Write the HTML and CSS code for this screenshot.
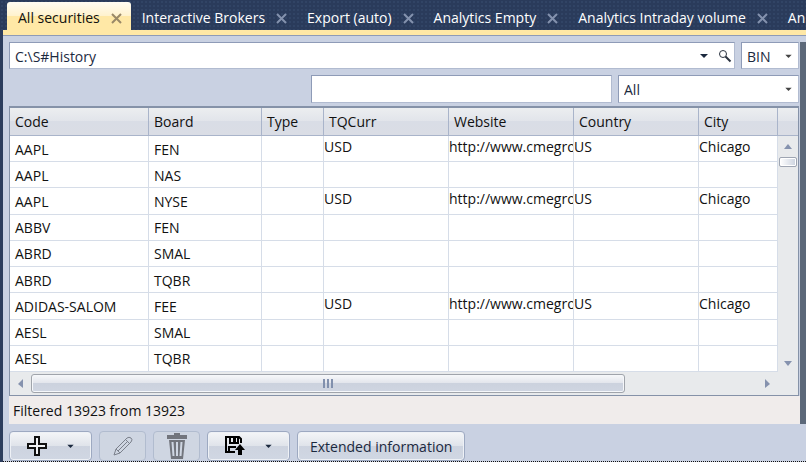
FILE: index.html
```html
<!DOCTYPE html>
<html lang="en">
<head>
<meta charset="utf-8">
<title>All securities</title>
<link rel="stylesheet" href="styles.css">
</head>
<body>
<nav class="tabs" aria-label="Open documents">
  <div class="tab active"><a href="#securities">All securities</a><button class="close" aria-label="Close All securities"><svg viewBox="0 0 11 11"><path d="M1 1l9 9M10 1l-9 9"/></svg></button></div>
  <div class="tab"><a href="#ib">Interactive Brokers</a><button class="close" aria-label="Close Interactive Brokers"><svg viewBox="0 0 11 11"><path d="M1 1l9 9M10 1l-9 9"/></svg></button></div>
  <div class="tab"><a href="#export">Export (auto)</a><button class="close" aria-label="Close Export"><svg viewBox="0 0 11 11"><path d="M1 1l9 9M10 1l-9 9"/></svg></button></div>
  <div class="tab"><a href="#empty">Analytics Empty</a><button class="close" aria-label="Close Analytics Empty"><svg viewBox="0 0 11 11"><path d="M1 1l9 9M10 1l-9 9"/></svg></button></div>
  <div class="tab"><a href="#volume">Analytics Intraday volume</a><button class="close" aria-label="Close Analytics Intraday volume"><svg viewBox="0 0 11 11"><path d="M1 1l9 9M10 1l-9 9"/></svg></button></div>
  <div class="tab"><a href="#next">An</a></div>
</nav>
<main class="panel">
  <div class="workspace">
    <div class="content">
      <div class="path-row">
        <div class="path field">
          <input type="text" value="C:\S#History" aria-label="Data path">
          <button class="plain" aria-label="Recent paths"><svg class="arrow" viewBox="0 0 8 5"><path d="M0 1h8L4 5z"/></svg></button>
          <button class="plain" aria-label="Browse"><svg class="search" viewBox="0 0 14 14"><circle cx="5" cy="5" r="3.500"/><path class="handle" d="M7.500 7.500l5 5"/></svg></button>
        </div>
        <div class="format field">
          <select aria-label="Format"><option>BIN</option></select>
          <svg class="arrow small" viewBox="0 0 8 5"><path d="M0 1h8L4 5z"/></svg>
        </div>
      </div>
      <div class="filter-row">
        <div class="search-box field"><input type="text" aria-label="Filter securities"></div>
        <div class="kind field">
          <select aria-label="Security type"><option>All</option></select>
          <svg class="arrow small" viewBox="0 0 8 5"><path d="M0 1h8L4 5z"/></svg>
        </div>
      </div>
      <div class="grid">
        <div class="grid-main">
          <div class="table-area">
          <table>
            <colgroup><col class="c-code"><col class="c-board"><col class="c-type"><col class="c-wide"><col class="c-wide"><col class="c-wide"><col></colgroup>
            <thead><tr><th>Code</th><th>Board</th><th>Type</th><th>TQCurr</th><th>Website</th><th>Country</th><th>City</th></tr></thead>
            <tbody>
              <tr><td>AAPL</td><td>FEN</td><td></td><td class="ext">USD</td><td class="ext">http://www.cmegroup.com</td><td class="ext">US</td><td class="ext">Chicago</td></tr>
              <tr><td>AAPL</td><td>NAS</td><td></td><td></td><td></td><td></td><td></td></tr>
              <tr><td>AAPL</td><td>NYSE</td><td></td><td class="ext">USD</td><td class="ext">http://www.cmegroup.com</td><td class="ext">US</td><td class="ext">Chicago</td></tr>
              <tr><td>ABBV</td><td>FEN</td><td></td><td></td><td></td><td></td><td></td></tr>
              <tr><td>ABRD</td><td>SMAL</td><td></td><td></td><td></td><td></td><td></td></tr>
              <tr><td>ABRD</td><td>TQBR</td><td></td><td></td><td></td><td></td><td></td></tr>
              <tr><td>ADIDAS-SALOM</td><td>FEE</td><td></td><td class="ext">USD</td><td class="ext">http://www.cmegroup.com</td><td class="ext">US</td><td class="ext">Chicago</td></tr>
              <tr><td>AESL</td><td>SMAL</td><td></td><td></td><td></td><td></td><td></td></tr>
              <tr><td>AESL</td><td>TQBR</td><td></td><td></td><td></td><td></td><td></td></tr>
            </tbody>
          </table>
          </div>
          <div class="vbar">
            <div class="vcap"></div>
            <svg class="up" viewBox="0 0 8 5"><path d="M0 5h8L4 0z"/></svg>
            <div class="vthumb"></div>
            <svg class="down" viewBox="0 0 8 5"><path d="M0 0h8L4 5z"/></svg>
          </div>
        </div>
        <div class="hbar">
          <svg class="side" viewBox="0 0 5 9"><path d="M5 0v9L0 5z"/></svg>
          <div class="hthumb"><i></i><i></i><i></i></div>
          <svg class="side" viewBox="0 0 5 9"><path d="M0 0v9l5-4z"/></svg>
        </div>
      </div>
      <div class="status">Filtered 13923 from 13923</div>
    </div>
    <div class="splitter"></div>
  </div>
  <div class="toolbar">
    <button class="btn split" aria-label="Add">
      <svg class="i20" viewBox="0 0 20 20"><path class="plus" d="M8 1h4v7h7v4h-7v7H8v-7H1V8h7z"/></svg>
      <svg class="arrow small" viewBox="0 0 8 5"><path d="M0 1h8L4 5z"/></svg>
    </button>
    <button class="btn off" disabled aria-label="Edit">
      <svg class="i20" viewBox="0 0 20 20"><path class="pencil" d="M1 19l2-6L14 2q2-1.500 4 0t0 4L7 17zM3 13l4 4M12.500 3.500l4 4M5 15L14.500 5.500"/></svg>
    </button>
    <button class="btn off" disabled aria-label="Delete">
      <svg class="bin" viewBox="0 0 20 26"><path d="M7 0h6v2h7v4H0V2h7zM2 7h16l-2 19H4z"/><path class="slots" d="M5.500 9l1 14M10 9v14M14.500 9l-1 14"/></svg>
    </button>
    <button class="btn split" aria-label="Export">
      <svg class="i20" viewBox="0 0 20 20"><path class="disk" d="M10 16H1V1h13l2 2v4M5 1v6h8V1M4 16v-5h7"/><path d="M8 1h3v5H8zM15 8l5 6h-3v5h-4v-5h-3z"/></svg>
      <svg class="arrow small" viewBox="0 0 8 5"><path d="M0 1h8L4 5z"/></svg>
    </button>
    <button class="btn text">Extended information</button>
  </div>
</main>
</body>
</html>
```
FILE: styles.css
```css
* { box-sizing: border-box; }

body {
  margin: 0;
  height: 100vh;
  display: flex;
  flex-direction: column;
  overflow: hidden;
  background: #2c3d5d;
  color: #111;
  font: 14px/20px "Open Sans", "Noto Sans", sans-serif;
}

button, input, select { font: inherit; color: #1b293e; }
svg { display: block; flex: none; }

/* Document tabs */
.tabs {
  display: flex;
  flex: none;
  height: 30px;
  padding: 2px 0 0 7px;
  overflow: hidden;
  background:
    radial-gradient(circle, #314465 1px, transparent 1px) 0 0 / 4px 4px,
    #2a3b5b;
}
.tab {
  display: flex;
  flex: none;
  align-items: center;
  gap: 11px;
  padding: 4px 9px 0 11px;
}
.tab a { color: #fff; text-decoration: none; white-space: nowrap; }
.tab.active {
  border-radius: 3px 3px 0 0;
  background: linear-gradient(#fffcf3, #fff2cd 50%, #ffe8a6 50%);
}
.tab.active a { color: #111; }
.close { padding: 0; border: 0; background: none; }
.close svg { width: 11px; height: 11px; fill: none; stroke: #8492ae; stroke-width: 2; }
.active .close svg { stroke: #9a8968; }

/* Document body */
.panel {
  flex: 1;
  min-height: 0;
  margin-left: 3px;
  border-top: 5px solid #ffe8a6;
  background: #c9d1e2;
  display: flex;
  flex-direction: column;
  box-shadow: inset 0 1px #8e9bb7;
}
.workspace { display: flex; flex: none; padding: 7px 0 0 6px; }
.content { flex: 1; min-width: 0; }
.splitter { width: 6px; background: #5c6879; }

.field {
  position: relative;
  display: flex;
  align-items: center;
  height: 27px;
  border: 1px solid #8e9bb7;
  border-right-color: #b1bbd0;
  border-bottom-color: #b1bbd0;
  background: #fff;
}
.field input, .field select {
  flex: 1;
  min-width: 0;
  height: 100%;
  padding: 2px 5px 0;
  border: 0;
  outline: 0;
  background: none;
  appearance: none;
}
.field > .arrow { position: absolute; right: 6px; top: 11px; pointer-events: none; }
.arrow { width: 8px; height: 5px; fill: #1b293e; }
.arrow.small { width: 7px; height: 4px; }
.field > .small { fill: #444; }
.plain { padding: 0; border: 0; background: none; }
.path-row { display: flex; gap: 6px; margin-right: 1px; }
.path { flex: 1; gap: 10px; padding-right: 2px; }
.format { width: 58px; }
.search { width: 14px; height: 14px; fill: none; stroke: #2b3340; stroke-width: 1; }
.handle { stroke-width: 2; }
.filter-row { display: flex; justify-content: flex-end; gap: 6px; margin: 6px 1px 3px 0; }
.filter-row .field { height: 28px; }
.search-box { width: 301px; }
.kind { width: 181px; }

/* Securities grid */
.grid {
  margin-right: 1px;
  border: 1px solid #8592a8;
  border-top-width: 2px;
  background: #e8eaec;
}
.grid-main { display: flex; }
.table-area { flex: 1; min-width: 0; }
table {
  width: 100%;
  height: 264px;
  table-layout: fixed;
  border-collapse: separate;
  border-spacing: 0;
  background: #fff;
}
.c-code { width: 139px; }
.c-board { width: 113px; }
.c-type { width: 62px; }
.c-wide { width: 125px; }
th, td {
  overflow: hidden;
  padding: 0 0 0 5px;
  border-right: 1px solid #d6dde8;
  border-bottom: 1px solid #d6dde8;
  text-align: left;
  font-weight: 400;
  white-space: nowrap;
}
th, .vcap {
  height: 28px;
  border-color: #a9b4ca;
  background: linear-gradient(#eceef0, #e1e4ea 50%, #d9dde6 50%, #dadde5);
}
td { padding-top: 2px; }
.ext { padding: 1px 0 0; vertical-align: top; }

.vbar { display: flex; flex-direction: column; align-items: center; width: 20px; }
.vcap { width: 100%; border-bottom: 1px solid #a9b4ca; }
.up, .down { width: 8px; height: 5px; fill: #8592ae; }
.up { margin: 8px 0; }
.down { margin: auto 0 6px; }
.vthumb { width: 18px; height: 10px; border: 1px solid #9ea5b2; border-radius: 2px; background: linear-gradient(90deg, #fff, #ccd3df); box-shadow: inset 0 0 0 1px #fff; }
.hbar { display: flex; align-items: center; height: 23px; padding: 0 28px 0 8px; }
.side { width: 5px; height: 9px; fill: #8592ae; }
.hthumb {
  display: flex;
  justify-content: center;
  align-items: center;
  gap: 2px;
  width: 79%;
  height: 19px;
  margin: 0 auto 0 8px;
  border: 1px solid #a0a4ab;
  border-radius: 3px;
  background: linear-gradient(#f7f8fa, #e1e4eb 50%, #ccd2de 50%, #cfd5e1);
  box-shadow: inset 0 0 0 1px #f5f7fa;
}
.hthumb i { width: 2px; height: 9px; background: #8190ad; }
.status { height: 28px; padding: 5px 4px; background: #f0eceb; }

/* Actions */
.toolbar {
  display: flex;
  flex: 1;
  align-items: flex-start;
  gap: 7px;
  padding: 7px 6px 0;
  border-bottom: 1px dotted #111;
}
.btn {
  display: flex;
  align-items: center;
  justify-content: center;
  width: 48px;
  height: 30px;
  padding: 0;
  border: 1px solid #9da9c1;
  border-radius: 4px;
  background: linear-gradient(#f4f6f8, #dfe3ea 50%, #cdd3df 50%, #d0d7e3);
  box-shadow: inset 0 0 0 1px #eef1f6;
}
.split { width: 83px; gap: 20px; }
.btn.text { width: auto; padding: 2px 12px 0; }
.off { width: 47px; background: #cfd6e2; border-color: #b1bccf; box-shadow: none; }
.i20 { width: 20px; height: 20px; }
.bin { width: 20px; height: 26px; fill: #72757d; }
.slots { stroke: #cfd6e2; stroke-width: 2; }
.plus { fill: #f2f3f5; stroke: #111; stroke-width: 2; }
.pencil { fill: none; stroke: #7b808b; stroke-width: 1; }
.disk { fill: none; stroke: #000; stroke-width: 2; }
```
